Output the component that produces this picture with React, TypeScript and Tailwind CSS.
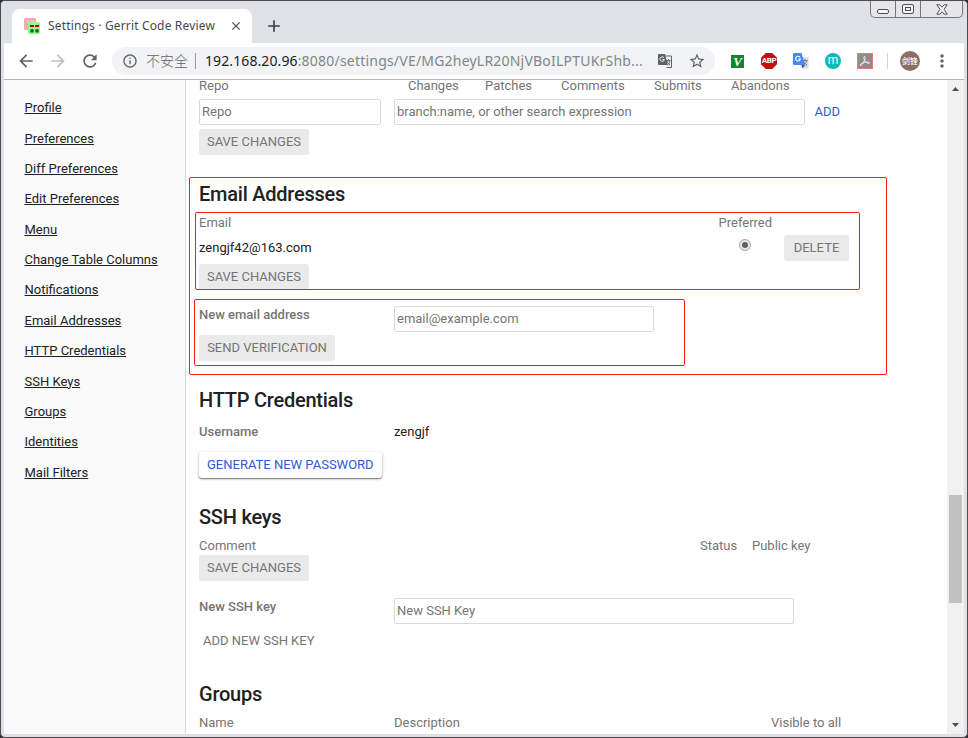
import React from "react";
import {
  MdAdd,
  MdArrowBack,
  MdArrowForward,
  MdClose,
  MdMoreVert,
  MdOutlineInfo,
  MdRefresh,
  MdStarBorder,
} from "react-icons/md";

const navItems = [
  "Profile",
  "Preferences",
  "Diff Preferences",
  "Edit Preferences",
  "Menu",
  "Change Table Columns",
  "Notifications",
  "Email Addresses",
  "HTTP Credentials",
  "SSH Keys",
  "Groups",
  "Identities",
  "Mail Filters",
];

function WindowButtons() {
  return (
    <div className="mr-1 flex h-[17px] w-[93px] rounded-b-[5px] border border-t-0 border-[#77777b] bg-[#e4e6ea]">
      <div className="flex w-[25px] items-center justify-center border-r border-[#77777b]">
        <div className="mt-[5px] h-[5px] w-3 rounded-[2px] border border-[#505056] bg-[#f4f4f6]" />
      </div>
      <div className="flex w-[25px] items-center justify-center border-r border-[#77777b]">
        <div className="flex h-2.5 w-3 items-center justify-center rounded-[2px] border border-[#505056] bg-[#f4f4f6]">
          <div className="h-1 w-1.5 border border-[#505056]" />
        </div>
      </div>
      <div className="flex flex-1 items-center justify-center">
        <svg width="12" height="11" viewBox="0 0 12 11" fill="#f4f4f6" stroke="#505056" strokeWidth="1">
          <path d="M.8.8h3L6 3.2 8.200.8h3L8 5.300l3.300 4.900H8L6 7.700l-2 2.500H.8L4 5.300z" />
        </svg>
      </div>
    </div>
  );
}

function GerritIcon() {
  return (
    <svg width="16" height="16" viewBox="0 0 16 16">
      <rect width="12" height="12" rx="1.500" fill="#fba9a9" />
      <path d="M2 3h3M7 3h3" stroke="#fcc9c9" strokeWidth="1.500" />
      <rect x="4" y="4" width="12" height="12" rx="1.500" fill="#91fa91" />
      <path d="M6 8h4M11 8h4" stroke="#b80000" strokeWidth="2" />
      <circle cx="8" cy="12.800" r="1.900" fill="#0b6e0b" />
      <circle cx="13" cy="12.800" r="1.900" fill="#0b6e0b" />
    </svg>
  );
}

function TranslateIcon({ colored = false }: { colored?: boolean }) {
  return colored ? (
    <svg width="16" height="16" viewBox="0 0 16 16">
      <path d="M6 4h9.500v11.500H9z" fill="#dcdcdc" />
      <path d="M9.500 7.500h5M12 6v1.500M10.500 8c.8 2 2 3.500 3.500 4.500M13.500 8c-.5 2-1.500 3-3 4" stroke="#617d8b" fill="none" />
      <path d="M1 0h7.500L12 12H1a1 1 0 0 1-1-1V1a1 1 0 0 1 1-1z" fill="#4688f4" />
      <path d="M8.500 12H12l-2.500 3.500z" fill="#3352b5" />
      <path d="M7 4.200A2.400 2.400 0 1 0 7.400 6H5.200" fill="none" stroke="#fff" strokeWidth="1.100" />
    </svg>
  ) : (
    <svg width="14" height="14" viewBox="0 0 14 14">
      <path d="M6 2h7.500v11.500H8.500" fill="none" stroke="#5f6368" />
      <path d="M8.500 6.500h4M10.500 5v1.500M9 7c.8 2 1.500 3 3 4M12 7c-.5 2-1 3-3 4" stroke="#5f6368" fill="none" />
      <path d="M1 0h6l3 11H1a1 1 0 0 1-1-1V1a1 1 0 0 1 1-1z" fill="#5f6368" />
      <path d="M6 3.800A2.200 2.200 0 1 0 6.400 5.500H4.500" fill="none" stroke="#fff" />
    </svg>
  );
}

function Extensions() {
  return (
    <div className="flex items-center">
      <div className="flex h-[13px] w-[13px] items-center justify-center bg-[#0b8a2c] font-['Liberation_Serif',serif] text-[13px] leading-none font-bold text-white italic">
        V
      </div>
      <div className="ml-[17px] flex h-4 w-4 items-center justify-center bg-[#c70d0c] font-['Roboto',sans-serif] text-[8px] leading-none font-bold tracking-[-0.3px] text-white [clip-path:polygon(30%_0,70%_0,100%_30%,100%_70%,70%_100%,30%_100%,0_70%,0_30%)]">
        ABP
      </div>
      <div className="ml-4">
        <TranslateIcon colored />
      </div>
      <div className="ml-4 flex h-4 w-4 items-center justify-center rounded-full bg-[#0cb9b3] pb-0.5 font-['Roboto',sans-serif] text-[12px] leading-none text-white">
        m
      </div>
      <svg className="ml-4" width="16" height="16" viewBox="0 0 16 16">
        <rect x=".5" y=".5" width="15" height="15" fill="#908c8a" stroke="#e38270" />
        <path d="M7.300 3.500c1.500 0 .7 3-.3 5s-2.500 4-3.500 4 .5-2.300 3.500-3 5.500-.5 5.500.4-3 .3-4.300-1.600S6.300 3.500 7.300 3.500z" fill="none" stroke="#f4f4f4" strokeWidth=".9" />
      </svg>
      <div className="ml-3.5 h-4 w-px bg-[#d2d4d8]" />
      <div className="ml-3 flex h-5 w-5 items-center justify-center rounded-full bg-[#8d6e63] font-['Noto_Sans_CJK_SC',sans-serif] text-[8px] leading-none font-medium whitespace-nowrap text-white">
        剑锋
      </div>
      <MdMoreVert className="ml-3 text-[#5f6368]" size={20} />
    </div>
  );
}

function BrowserChrome() {
  return (
    <header>
      <div className="flex h-[42px] justify-between bg-[#dee1e6]">
        <div className="flex items-end">
          <div className="ml-[11px] flex h-[34px] w-60 items-center rounded-t-lg bg-white pl-3 text-[#45494d]">
            <GerritIcon />
            <span className="ml-2 w-[172px] font-['Noto_Sans',sans-serif] text-[12px] tracking-[0.16px] whitespace-nowrap">
              Settings · Gerrit Code Review
            </span>
            <MdClose className="ml-[9px]" size={14} />
          </div>
          <MdAdd className="mb-[7px] ml-3 text-[#3c4043]" size={20} />
        </div>
        <WindowButtons />
      </div>
      <div className="mr-[3px] ml-[3px] flex h-9 items-center bg-white">
        <MdArrowBack className="ml-3 text-[#5f6368]" size={20} />
        <MdArrowForward className="ml-3 text-[#bcbec1]" size={20} />
        <MdRefresh className="ml-3 text-[#5f6368]" size={20} />
        <div className="ml-3 flex h-7 w-[603px] items-center rounded-full bg-[#f1f3f4] pl-2.5 font-['Noto_Sans','Noto_Sans_CJK_SC',sans-serif] text-[14px] whitespace-nowrap text-[#5f6368]">
          <MdOutlineInfo size={16} />
          <span className="ml-2 w-[42px] pb-0.5 font-['Noto_Sans_CJK_SC',sans-serif] leading-5 font-light">不安全</span>
          <span className="ml-[7px] h-4 w-px bg-[#9a9da1]" />
          <span className="ml-[9px] w-[440px] tracking-[0.21px] text-[#80868b]">
            <span className="tracking-[0.1px] text-[#202124]">192.168.20.96</span>:8080/settings/VE/MG2heyLR20NjVBoILPTUKrShb...
          </span>
          <span className="ml-[13px]">
            <TranslateIcon />
          </span>
          <MdStarBorder className="ml-4" size={18} />
        </div>
        <div className="ml-4">
          <Extensions />
        </div>
      </div>
      <div className="mx-[3px] h-px bg-[#b6b4b6]" />
    </header>
  );
}

function Sidebar() {
  return (
    <nav className="ml-px w-[181px] shrink-0 border-r border-[#dadada] bg-[#fafafa] pt-[13px] pl-[19.500px]">
      {navItems.map((item) => (
        <div key={item} className="flex h-[30.375px] items-center text-[#212121]">
          <a className="underline">{item}</a>
        </div>
      ))}
    </nav>
  );
}

function Field({ text, className }: { text: string; className: string }) {
  return (
    <div className={`flex h-[26px] shrink-0 items-center rounded-[2px] border border-[#dadada] pl-[2px] ${className}`}>
      {text}
    </div>
  );
}

function Button({ text, className }: { text: string; className: string }) {
  return (
    <div className={`flex h-[26px] shrink-0 items-center justify-center rounded-[3px] bg-[#eaeaea] ${className}`}>
      {text}
    </div>
  );
}

function Heading({ text, className }: { text: string; className: string }) {
  return (
    <h2 className={`h-7 text-[20px] leading-7 font-medium tracking-[-0.24px] text-[#212121] ${className}`}>{text}</h2>
  );
}

function Settings() {
  return (
    <main className="flex-1 overflow-hidden pl-[13px] whitespace-nowrap text-[#757575]">
      <section>
        <div className="flex h-[19px] leading-3">
          <span className="w-[209px]">Repo</span>
          <span className="w-[77px]">Changes</span>
          <span className="w-[76px]">Patches</span>
          <span className="w-[93px]">Comments</span>
          <span className="w-[77px]">Submits</span>
          <span>Abandons</span>
        </div>
        <div className="flex items-center">
          <Field text="Repo" className="w-[182px]" />
          <Field text="branch:name, or other search expression" className="ml-[13px] w-[411px]" />
          <span className="ml-[9.500px] text-[#2f5bd3]">ADD</span>
        </div>
        <Button text="SAVE CHANGES" className="mt-1 w-[110px]" />
      </section>

      <section>
        <Heading text="Email Addresses" className="mt-[25px]" />
        <div className="mt-[5px] flex h-5 leading-5">
          <span className="w-[519.500px]">Email</span>
          <span>Preferred</span>
        </div>
        <div className="mt-0.5 flex h-[26px]">
          <span className="w-[540px] leading-[25px] text-[#212121]">zengjf42@163.com</span>
          <span className="mt-1 flex h-3 w-3 items-center justify-center rounded-full border border-[#a5a5a5] bg-[#e8e8e8]">
            <span className="h-1.5 w-1.5 rounded-full bg-[#606060]" />
          </span>
          <Button text="DELETE" className="ml-[33px] w-[65px]" />
        </div>
        <Button text="SAVE CHANGES" className="mt-[3px] w-[110px]" />
        <div className="mt-4 flex h-[26px]">
          <span className="w-[195px] leading-[18px] font-medium">New email address</span>
          <Field text="email@example.com" className="w-[260px]" />
        </div>
        <Button text="SEND VERIFICATION" className="mt-[3px] w-[136px]" />
      </section>

      <section>
        <Heading text="HTTP Credentials" className="mt-[25px]" />
        <div className="mt-2 flex h-5 leading-5">
          <span className="w-[195px] font-medium">Username</span>
          <span className="text-[#212121]">zengjf</span>
        </div>
        <div className="mt-2.5 flex h-[26px] w-[183px] items-center rounded-[3px] bg-white pl-2 text-[#2f5bd3] shadow-[0_1px_3px_rgba(0,0,0,0.3),0_1px_1px_rgba(0,0,0,0.35)]">
          GENERATE NEW PASSWORD
        </div>
      </section>

      <section>
        <Heading text="SSH keys" className="mt-[25px]" />
        <div className="mt-[5px] flex h-[19px] leading-5">
          <span className="w-[501px]">Comment</span>
          <span className="w-[52px]">Status</span>
          <span>Public key</span>
        </div>
        <Button text="SAVE CHANGES" className="w-[110px]" />
        <div className="mt-[17px] flex h-[26px]">
          <span className="w-[195px] leading-[18px] font-medium">New SSH key</span>
          <Field text="New SSH Key" className="w-[400px]" />
        </div>
        <div className="mt-[7px] pl-1 leading-5">ADD NEW SSH KEY</div>
      </section>

      <section>
        <Heading text="Groups" className="mt-[29px]" />
        <div className="mt-[5px] flex h-5 leading-5">
          <span className="w-[195px]">Name</span>
          <span className="w-[377px]">Description</span>
          <span>Visible to all</span>
        </div>
      </section>
    </main>
  );
}

function Scrollbar() {
  return (
    <div className="flex w-[17px] flex-col items-center bg-[#f1f1f1]">
      <svg width="17" height="17" viewBox="0 0 17 17">
        <path d="M5 11h7L8.500 7z" fill="#505050" />
      </svg>
      <div className="mt-[398px] mb-auto h-[108px] w-[13px] bg-[#c1c1c1]" />
      <svg width="17" height="17" viewBox="0 0 17 17">
        <path d="M5 6h7l-3.500 4z" fill="#505050" />
      </svg>
    </div>
  );
}

export default function App() {
  return (
    <div className="bg-[#302c30]">
      <div className="relative h-[738px] w-[968px] overflow-hidden rounded-[5px] border border-[#504b4f] bg-[#dee1e6] font-['Roboto',sans-serif] text-[13px] leading-5">
        <BrowserChrome />
        <div className="mx-[3px] flex h-[654px] overflow-hidden bg-white">
          <Sidebar />
          <Settings />
          <Scrollbar />
        </div>
        <div className="absolute top-[176px] left-[188px] h-[198px] w-[698px] rounded-[2px] border border-[#fb1c16]" />
        <div className="absolute top-[211px] left-[194px] h-[78px] w-[665px] rounded-[2px] border border-[#fb1c16]" />
        <div className="absolute top-[298px] left-[193px] h-[67px] w-[491px] rounded-[2px] border border-[#fb1c16]" />
      </div>
    </div>
  );
}
